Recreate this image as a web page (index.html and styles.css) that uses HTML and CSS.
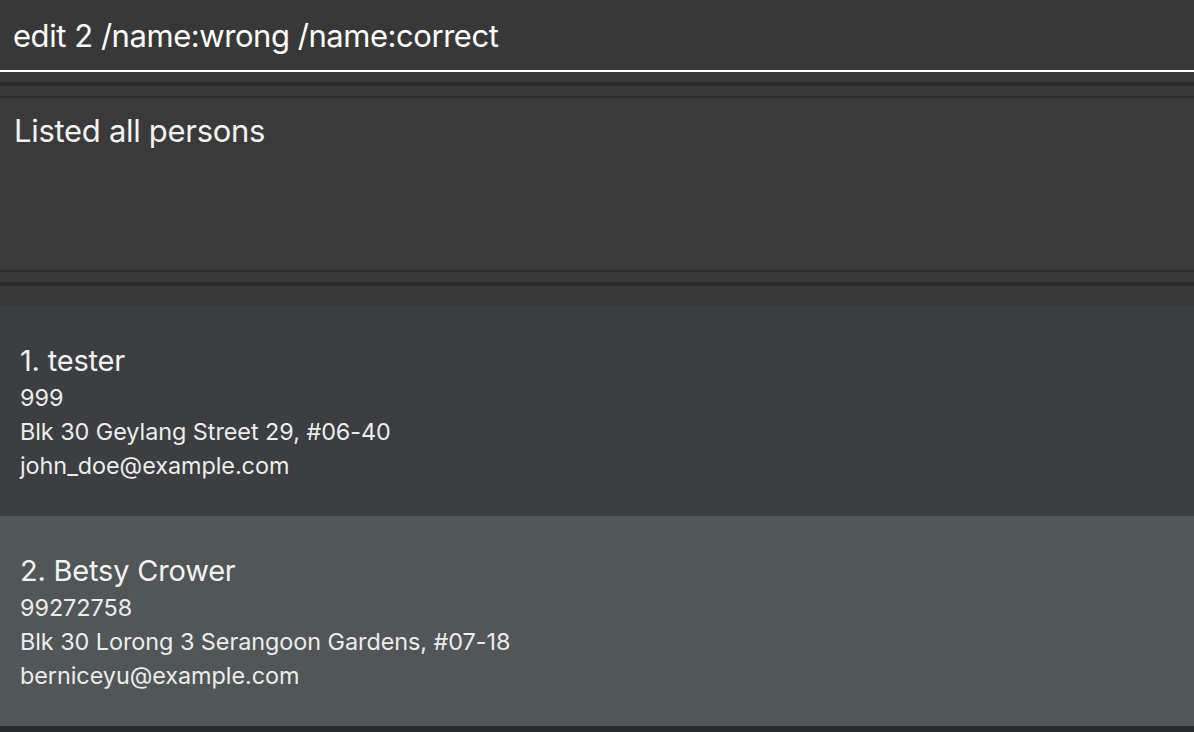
FILE: index.html
```html
<!DOCTYPE html>
<html>
<head>
<meta charset="utf-8">
<link rel="stylesheet" href="styles.css">
</head>
<body>
<div class="app">
  <div class="command">
    <div class="command-text">edit 2 /name:wrong /name:correct</div>
  </div>
  <div class="band band-top"></div>
  <div class="result">
    <div class="result-text">Listed all persons</div>
  </div>
  <div class="band band-bottom"></div>
  <div class="list-pad"></div>
  <div class="list">
    <div class="card">
      <div class="name">1. tester</div>
      <div class="field">999</div>
      <div class="field">Blk 30 Geylang Street 29, #06-40</div>
      <div class="field">john_doe@example.com</div>
    </div>
    <div class="card odd">
      <div class="name">2. Betsy Crower</div>
      <div class="field">99272758</div>
      <div class="field">Blk 30 Lorong 3 Serangoon Gardens, #07-18</div>
      <div class="field">berniceyu@example.com</div>
    </div>
  </div>
</div>
</body>
</html>
```
FILE: styles.css
```css
html, body {
  margin: 0;
  padding: 0;
  background: #2b2b2b;
  height: 100%;
  overflow: hidden;
}
.app {
  width: 1194px;
  height: 732px;
  display: flex;
  flex-direction: column;
  font-family: Inter, "Noto Sans", sans-serif;
  color: #f2f2f2;
  background: #2b2b2b;
}
.command {
  height: 70px;
  background: #383838;
  border-bottom: 2px solid #ffffff;
  display: flex;
  align-items: center;
  padding-left: 13px;
}
.command-text {
  font-size: 31px;
  color: #ffffff;
  letter-spacing: -0.45px;
}
.band-top {
  height: 26px;
  background: linear-gradient(#393939 0 10px, #2b2b2b 10px 14px, #393939 14px 24px, #2b2b2b 24px 26px);
}
.result {
  height: 172px;
  background: #3a3a3a;
  padding: 14px 14px;
  box-sizing: border-box;
}
.result-text {
  font-size: 31px;
  letter-spacing: -0.3px;
}
.band-bottom {
  height: 16px;
  background: linear-gradient(#2b2b2b 0 2px, #393939 2px 12px, #2b2b2b 12px 16px);
}
.list-pad {
  height: 20px;
  background: #393939;
}
.list {
  flex: 1;
  background: #2b2b2b;
  display: flex;
  flex-direction: column;
}
.card {
  height: 210px;
  box-sizing: border-box;
  background: #3c3e41;
  padding: 37px 20px 0 20px;
}
.card.odd {
  background: #515658;
}
.name {
  font-size: 29px;
  line-height: 36px;
  letter-spacing: -0.2px;
  color: #f2f2f2;
  margin-bottom: 2px;
}
.field {
  font-size: 23.4px;
  line-height: 34px;
  letter-spacing: -0.05px;
  color: #ececec;
}
```
